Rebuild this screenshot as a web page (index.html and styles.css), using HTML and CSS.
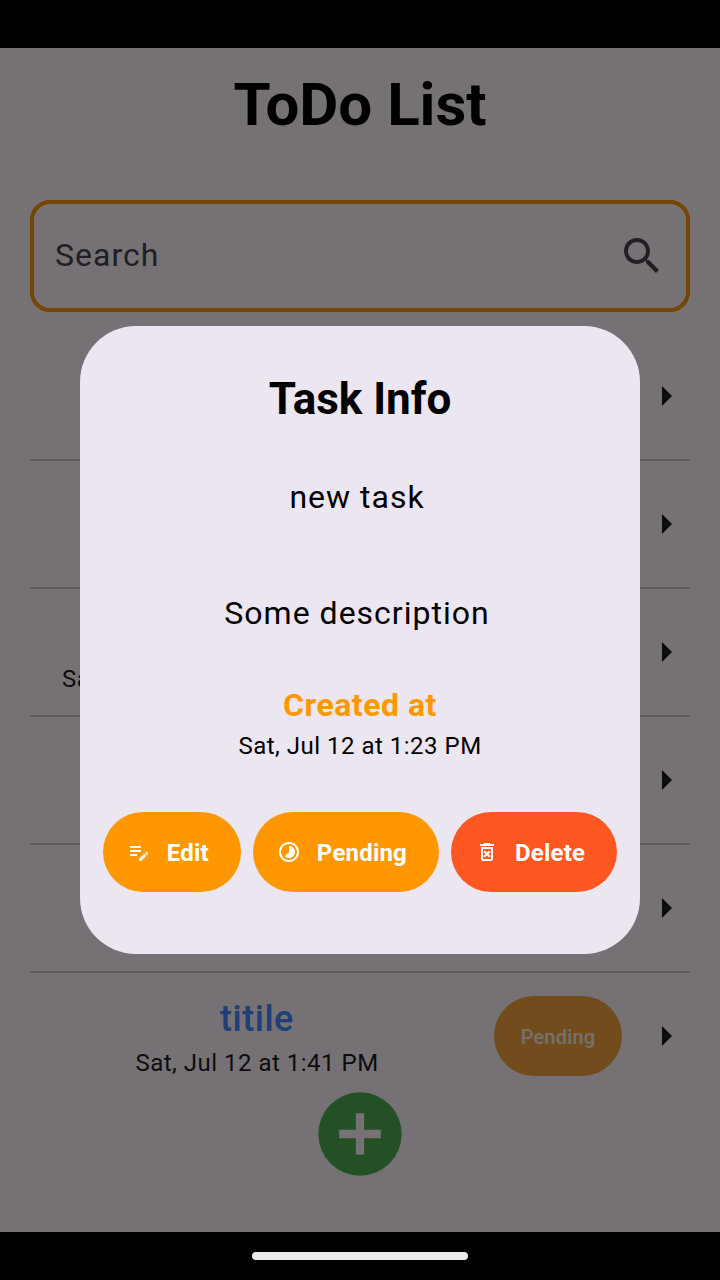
FILE: index.html
```html
<!DOCTYPE html>
<html lang="en">
<head>
<meta charset="utf-8">
<title>ToDo List</title>
<link rel="stylesheet" href="styles.css">
</head>
<body>
<div class="device">
  <div class="status-bar"></div>
  <main class="screen">
    <h1 class="page-title">ToDo List</h1>
    <div class="search">
      <span class="search-label">Search</span>
      <svg class="search-icon" viewBox="0 0 24 24"><path d="M15.5 14h-.79l-.28-.27C15.41 12.59 16 11.11 16 9.5 16 5.91 13.09 3 9.5 3S3 5.91 3 9.5 5.91 16 9.5 16c1.61 0 3.09-.59 4.23-1.57l.27.28v.79l5 4.99L20.49 19l-4.99-5zm-6 0C7.01 14 5 11.99 5 9.5S7.01 5 9.5 5 14 7.01 14 9.5 11.99 14 9.5 14z"/></svg>
    </div>
    <ul class="tasks">
      <li class="task"><svg class="arrow" viewBox="0 0 24 24"><path d="M10 17l5-5-5-5v10z"/></svg></li>
      <li class="task"><svg class="arrow" viewBox="0 0 24 24"><path d="M10 17l5-5-5-5v10z"/></svg></li>
      <li class="task">
        <div class="task-text start"><span class="task-name"></span><span class="task-date">Sat</span></div>
        <svg class="arrow" viewBox="0 0 24 24"><path d="M10 17l5-5-5-5v10z"/></svg>
      </li>
      <li class="task"><svg class="arrow" viewBox="0 0 24 24"><path d="M10 17l5-5-5-5v10z"/></svg></li>
      <li class="task"><svg class="arrow" viewBox="0 0 24 24"><path d="M10 17l5-5-5-5v10z"/></svg></li>
      <li class="task">
        <div class="task-text"><span class="task-name">titile</span><span class="task-date">Sat, Jul 12 at 1:41 PM</span></div>
        <span class="chip">Pending</span>
        <svg class="arrow" viewBox="0 0 24 24"><path d="M10 17l5-5-5-5v10z"/></svg>
      </li>
    </ul>
    <svg class="add" viewBox="0 0 24 24"><circle cx="12" cy="12" r="10"/><path d="M17 13h-4v4h-2v-4H7v-2h4V7h2v4h4v2z"/></svg>
  </main>
  <div class="nav-bar"><div class="handle"></div></div>
  <div class="scrim">
    <section class="dialog">
      <h2 class="dialog-title">Task Info</h2>
      <p class="field name">new task</p>
      <p class="field description">Some description</p>
      <p class="created">Created at</p>
      <p class="created-date">Sat, Jul 12 at 1:23 PM</p>
      <div class="actions">
        <button class="button"><svg viewBox="0 0 24 24"><path d="M3 10h11v2H3v-2zm0-2h11V6H3v2zm0 8h7v-2H3v2zm15.01-3.13l.71-.71c.39-.39 1.02-.39 1.41 0l.71.71c.39.39.39 1.02 0 1.41l-.71.71-2.12-2.12zm-.71.71l-5.3 5.3V21h2.12l5.3-5.3-2.12-2.12z"/></svg><span class="button-label">Edit</span></button>
        <button class="button"><svg viewBox="0 0 24 24"><path d="M16.24 7.76C15.07 6.59 13.54 6 12 6v6l-4.24 4.24c2.34 2.34 6.14 2.34 8.49 0 2.34-2.34 2.34-6.14-.01-8.48zM12 2C6.48 2 2 6.48 2 12s4.48 10 10 10 10-4.48 10-10S17.52 2 12 2zm0 18c-4.42 0-8-3.58-8-8s3.58-8 8-8 8 3.58 8 8-3.58 8-8 8z"/></svg><span class="button-label">Pending</span></button>
        <button class="button delete"><svg viewBox="0 0 24 24"><path d="M14.12 10.47L12 12.59l-2.13-2.12-1.41 1.41L10.59 14l-2.12 2.12 1.41 1.41L12 15.41l2.12 2.12 1.41-1.41L13.41 14l2.12-2.12zM15.5 4l-1-1h-5l-1 1H5v2h14V4zM6 19c0 1.1.9 2 2 2h8c1.1 0 2-.9 2-2V7H6v12zM8 9h8v10H8V9z"/></svg><span class="button-label">Delete</span></button>
      </div>
    </section>
  </div>
</div>
</body>
</html>
```
FILE: styles.css
```css
* { box-sizing: border-box; margin: 0; padding: 0; }
body { font-family: Roboto, "Liberation Sans", sans-serif; color: #000; }
svg { display: block; flex: none; }

.device {
  position: relative;
  display: flex;
  flex-direction: column;
  width: 720px;
  height: 1280px;
  overflow: hidden;
  background: #000;
}
.status-bar { height: 48px; flex: none; }
.screen {
  display: flex;
  flex-direction: column;
  height: 1184px;
  flex: none;
  padding: 21px 30px 0;
  background: #fef7ff;
}
.page-title {
  font-size: 60px;
  font-weight: 700;
  line-height: 72px;
  text-align: center;
}

.search {
  display: flex;
  align-items: center;
  justify-content: space-between;
  height: 112px;
  margin-top: 59px;
  padding: 0 20px 0 21px;
  border: 4px solid #ff9800;
  border-radius: 20px;
}
.search-label {
  padding-bottom: 2px;
  font-size: 32px;
  letter-spacing: 1px;
  color: #49454f;
}
.search-icon { width: 48px; height: 48px; fill: #49454f; }

.tasks {
  height: 751px;
  margin-top: 21px;
  overflow: hidden;
  list-style: none;
}
.task {
  display: flex;
  align-items: center;
  justify-content: flex-end;
  height: 128px;
  padding-left: 32px;
  border-bottom: 2px solid #cac4d0;
}
.task:last-child { border-color: transparent; }
.task-text {
  display: flex;
  flex: 1;
  flex-direction: column;
  align-items: center;
  margin-right: 42px;
  padding-top: 5px;
}
.task-text.start { align-items: flex-start; }
.task-name {
  height: 50px;
  font-size: 36px;
  font-weight: 500;
  line-height: 51px;
  letter-spacing: 0.5px;
  color: #448aff;
}
.task-date {
  font-size: 24px;
  line-height: 39px;
  letter-spacing: 0.5px;
  color: #1d1b20;
}
.chip {
  width: 128px;
  height: 80px;
  margin-right: 20px;
  border-radius: 40px;
  background: #faa53f;
  color: #fef7f0;
  font-size: 20px;
  font-weight: 500;
  line-height: 82px;
  letter-spacing: 0.2px;
  text-align: center;
}
.arrow { width: 48px; height: 48px; fill: #1d1b20; }
.add { width: 100px; height: 100px; align-self: center; }
.add circle { fill: #4caf50; }
.add path { fill: #fef7ff; }

.nav-bar {
  display: flex;
  align-items: center;
  justify-content: center;
  height: 48px;
  flex: none;
}
.handle {
  position: relative;
  z-index: 2;
  width: 216px;
  height: 8px;
  border-radius: 4px;
  background: #ebebeb;
}

.scrim {
  position: absolute;
  inset: 0;
  display: flex;
  align-items: center;
  justify-content: center;
  background: rgba(0, 0, 0, 0.54);
}
.dialog {
  width: 560px;
  height: 628px;
  padding: 45px 20px 0;
  border-radius: 56px;
  background: #ece6f0;
  text-align: center;
}
.dialog-title { font-size: 44px; font-weight: 700; line-height: 56px; }
.field {
  font-size: 32px;
  line-height: 48px;
  letter-spacing: 1px;
}
.name { margin-top: 46px; padding-right: 6px; }
.description { margin-top: 68px; padding-right: 6px; }
.created {
  margin-top: 44px;
  color: #ff9800;
  font-size: 32px;
  font-weight: 700;
  line-height: 48px;
  letter-spacing: 0.5px;
}
.created-date {
  margin-top: 1px;
  font-size: 24px;
  line-height: 32px;
  letter-spacing: 0.5px;
}
.actions {
  display: flex;
  justify-content: center;
  gap: 12px;
  margin-top: 50px;
}
.button {
  display: flex;
  align-items: center;
  gap: 16px;
  height: 80px;
  padding: 0 32px 0 24px;
  border: 0;
  border-radius: 40px;
  background: #ff9800;
  color: #fff;
  font: 700 24px Roboto, "Liberation Sans", sans-serif;
  letter-spacing: 0.2px;
}
.button-label { padding-top: 2px; }
.button svg { width: 24px; height: 24px; fill: currentColor; }
.delete { background: #ff5722; }
```
